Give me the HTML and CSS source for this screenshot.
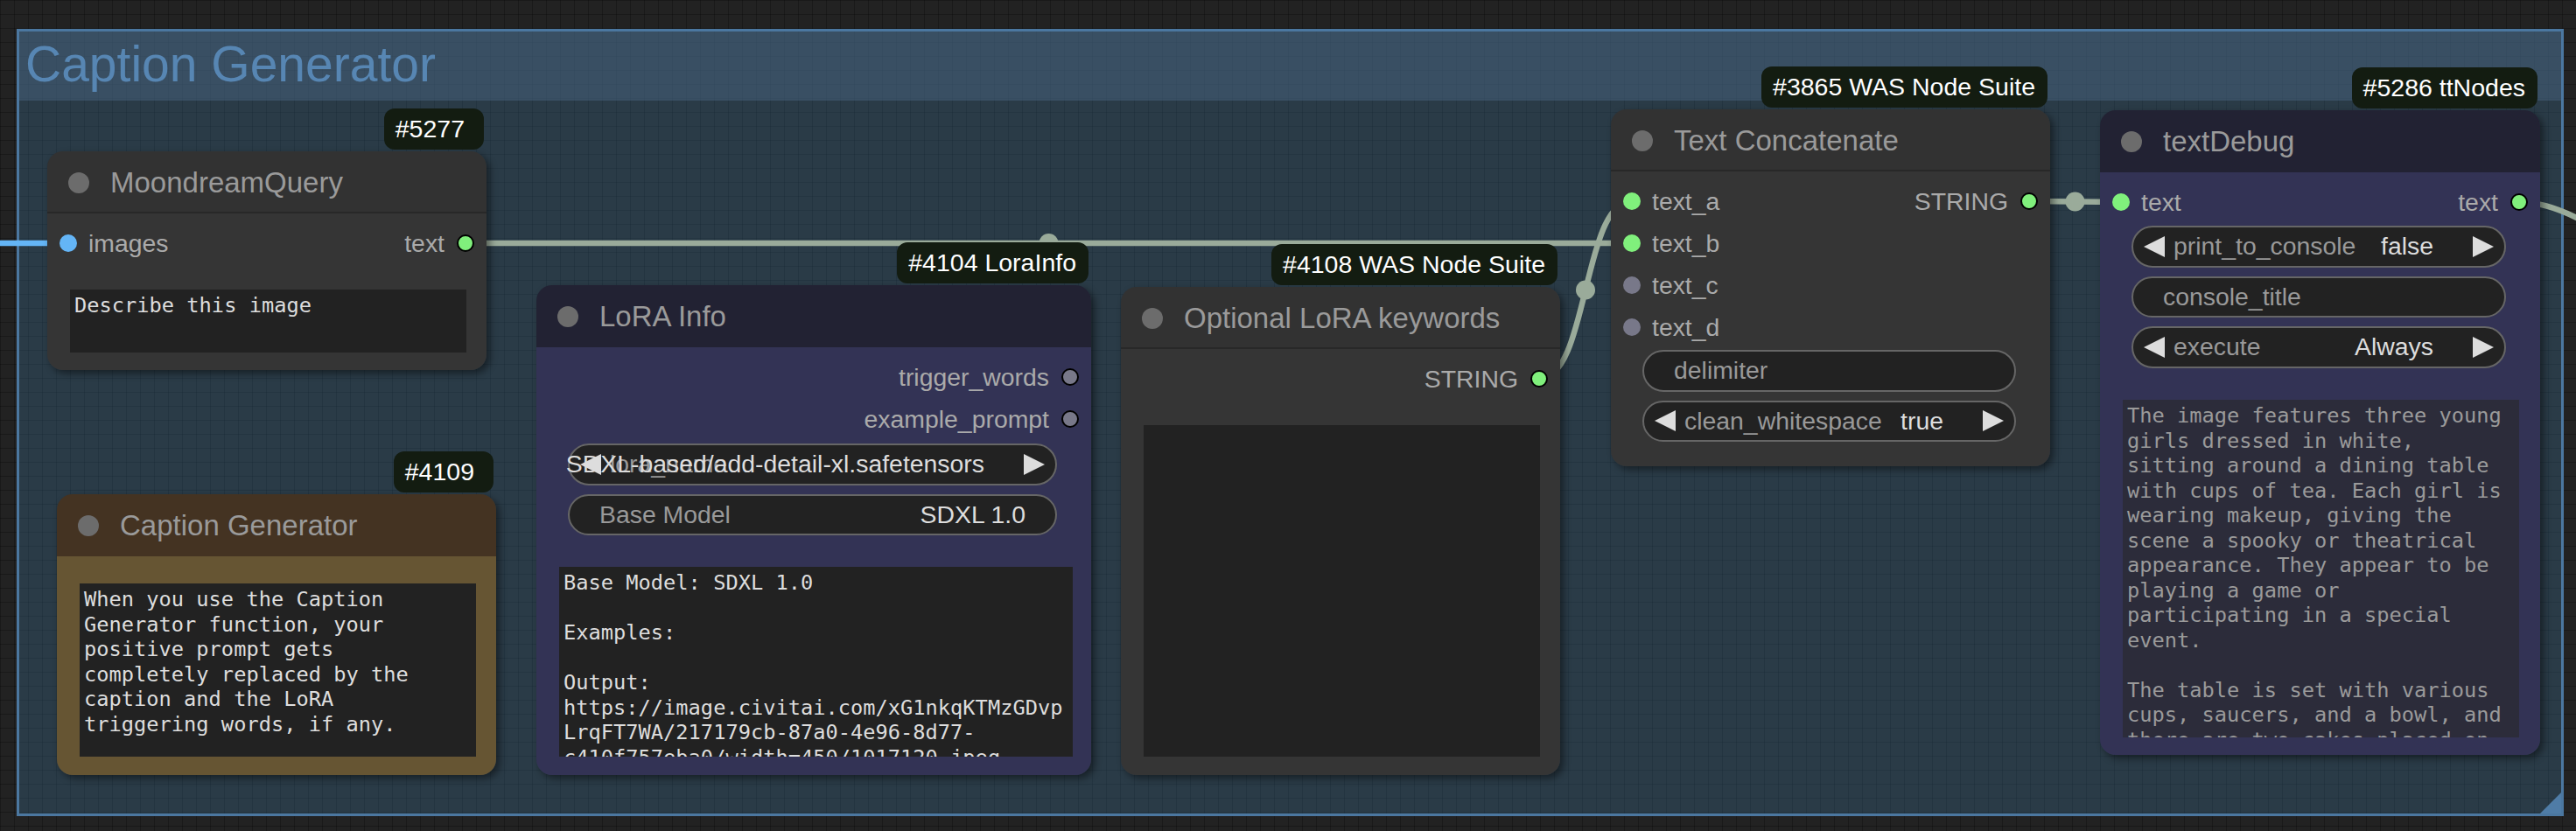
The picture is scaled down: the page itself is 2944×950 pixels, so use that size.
FILE: index.html
```html
<!DOCTYPE html>
<html lang="en">
<head>
<meta charset="utf-8">
<title>Caption Generator</title>
<link rel="stylesheet" href="styles.css">
</head>
<body>
<div class="canvas">
  <div class="group">
    <div class="group-title">Caption Generator</div>
    <div class="group-resize"></div>
  </div>

  <svg class="links" width="2944" height="950" viewBox="0 0 2944 950">
    <path class="link link-image" d="M0 278 L78 278"/>
    <path class="link" d="M532 278 C865 278 1532 278 1865 278"/>
    <circle class="link-mid" cx="1198.5" cy="278" r="11"/>
    <path class="link" d="M1759 433 C1816 433 1808 230 1865 230"/>
    <circle class="link-mid" cx="1812" cy="331.5" r="11"/>
    <path class="link" d="M2319 230 C2345 230 2398 231 2424 231"/>
    <circle class="link-mid" cx="2371.5" cy="230.5" r="11"/>
    <path class="link" d="M2879 231 C3039 231 3240 600 3400 600"/>
  </svg>

  <div class="node default n-moondream">
    <div class="badge badge-wide">#5277</div>
    <div class="title"><span class="tdot"></span><span class="tname">MoondreamQuery</span></div>
    <div class="body">
      <div class="slot-row">
        <div class="slot-in"><span class="dot dot-image"></span>images</div>
        <div class="slot-out">text<span class="dot dot-string dot-out"></span></div>
      </div>
      <textarea class="ta" readonly>Describe this image</textarea>
    </div>
  </div>

  <div class="node yellow n-note">
    <div class="badge badge-wide">#4109</div>
    <div class="title"><span class="tdot"></span><span class="tname">Caption Generator</span></div>
    <div class="body">
      <textarea class="ta" readonly>When you use the Caption Generator function, your positive prompt gets completely replaced by the caption and the LoRA triggering words, if any.</textarea>
    </div>
  </div>

  <div class="node blue n-lora">
    <div class="badge">#4104 LoraInfo</div>
    <div class="title"><span class="tdot"></span><span class="tname">LoRA Info</span></div>
    <div class="body">
      <div class="slot-row">
        <div class="slot-out">trigger_words<span class="dot dot-idle dot-out"></span></div>
      </div>
      <div class="slot-row">
        <div class="slot-out">example_prompt<span class="dot dot-idle dot-out"></span></div>
      </div>
      <div class="widgets">
        <div class="w combo"><span class="arr arr-l"></span><span class="wl">lora_name</span><span class="wv">SDXL-based/add-detail-xl.safetensors</span><span class="arr arr-r"></span></div>
        <div class="w text"><span class="wl">Base Model</span><span class="wv">SDXL 1.0</span></div>
      </div>
      <textarea class="ta" readonly>Base Model: SDXL 1.0

Examples:

Output:
https://image.civitai.com/xG1nkqKTMzGDvpLrqFT7WA/217179cb-87a0-4e96-8d77-c410f757eba0/width=450/1017120.jpeg</textarea>
    </div>
  </div>

  <div class="node default n-optional">
    <div class="badge">#4108 WAS Node Suite</div>
    <div class="title"><span class="tdot"></span><span class="tname">Optional LoRA keywords</span></div>
    <div class="body">
      <div class="slot-row">
        <div class="slot-out">STRING<span class="dot dot-string dot-out"></span></div>
      </div>
      <textarea class="ta" readonly></textarea>
    </div>
  </div>

  <div class="node default n-concat">
    <div class="badge">#3865 WAS Node Suite</div>
    <div class="title"><span class="tdot"></span><span class="tname">Text Concatenate</span></div>
    <div class="body">
      <div class="slot-row">
        <div class="slot-in"><span class="dot dot-string"></span>text_a</div>
        <div class="slot-out">STRING<span class="dot dot-string dot-out"></span></div>
      </div>
      <div class="slot-row">
        <div class="slot-in"><span class="dot dot-string"></span>text_b</div>
      </div>
      <div class="slot-row">
        <div class="slot-in"><span class="dot dot-idle"></span>text_c</div>
      </div>
      <div class="slot-row">
        <div class="slot-in"><span class="dot dot-idle"></span>text_d</div>
      </div>
      <div class="widgets">
        <div class="w text"><span class="wl">delimiter</span><span class="wv"></span></div>
        <div class="w combo"><span class="arr arr-l"></span><span class="wl">clean_whitespace</span><span class="wv">true</span><span class="arr arr-r"></span></div>
      </div>
    </div>
  </div>

  <div class="node blue n-debug">
    <div class="badge">#5286 ttNodes</div>
    <div class="title"><span class="tdot"></span><span class="tname">textDebug</span></div>
    <div class="body">
      <div class="slot-row">
        <div class="slot-in"><span class="dot dot-string"></span>text</div>
        <div class="slot-out">text<span class="dot dot-string dot-out"></span></div>
      </div>
      <div class="widgets">
        <div class="w combo"><span class="arr arr-l"></span><span class="wl">print_to_console</span><span class="wv">false</span><span class="arr arr-r"></span></div>
        <div class="w text"><span class="wl">console_title</span><span class="wv"></span></div>
        <div class="w combo"><span class="arr arr-l"></span><span class="wl">execute</span><span class="wv">Always</span><span class="arr arr-r"></span></div>
      </div>
      <textarea class="ta ta-disabled" readonly>The image features three young girls dressed in white, sitting around a dining table with cups of tea. Each girl is wearing makeup, giving the scene a spooky or theatrical appearance. They appear to be playing a game or participating in a special event.

The table is set with various cups, saucers, and a bowl, and there are two cakes placed on the table as well.</textarea>
    </div>
  </div>
</div>
</body>
</html>
```

FILE: styles.css
```css
* { box-sizing: border-box; }

html, body {
  margin: 0;
  padding: 0;
}

body {
  width: 2944px;
  height: 950px;
  overflow: hidden;
  background-color: #222222;
  background-image:
    linear-gradient(to right, rgba(0, 0, 0, 0.28) 1px, transparent 1px),
    linear-gradient(to bottom, rgba(0, 0, 0, 0.28) 1px, transparent 1px);
  background-size: 16px 16px;
  font-family: "Liberation Sans", Arial, sans-serif;
}

.canvas {
  position: relative;
  width: 2944px;
  height: 950px;
}

/* ---------- group ---------- */
.group {
  position: absolute;
  left: 19px;
  top: 33px;
  width: 2911px;
  height: 900px;
  border: 3px solid #4b77a0;
  background: rgba(63, 120, 158, 0.3);
}

.group-title {
  height: 79px;
  background: rgba(72, 100, 128, 0.5);
  color: #5786b3;
  font-size: 57px;
  padding: 0 0 6px 7px;
  display: flex;
  align-items: center;
  white-space: nowrap;
}

.group-resize {
  position: absolute;
  right: 0;
  bottom: 0;
  width: 0;
  height: 0;
  border-left: 24px solid transparent;
  border-bottom: 24px solid #4f7ca6;
}

/* ---------- links ---------- */
.links {
  position: absolute;
  left: 0;
  top: 0;
  overflow: visible;
}

.link {
  fill: none;
  stroke: #9aab9a;
  stroke-width: 6.5;
}

.link-image {
  stroke: #64b5f6;
}

.link-mid {
  fill: #9aab9a;
}

/* ---------- nodes ---------- */
.node {
  position: absolute;
  border-radius: 18px;
  box-shadow: 4px 4px 8px rgba(0, 0, 0, 0.45);
  display: flex;
  flex-direction: column;
}

.n-moondream { left: 54px;   top: 173px; width: 502px; height: 250px; }
.n-note      { left: 65px;   top: 565px; width: 502px; height: 321px; }
.n-lora      { left: 613px;  top: 326px; width: 634px; height: 560px; }
.n-optional  { left: 1281px; top: 328px; width: 502px; height: 558px; }
.n-concat    { left: 1841px; top: 125px; width: 502px; height: 408px; }
.n-debug     { left: 2400px; top: 126px; width: 503px; height: 737px; }

.title {
  height: 71px;
  flex: none;
  display: flex;
  align-items: center;
  border-radius: 18px 18px 0 0;
  font-size: 33px;
  color: #9a9a9a;
  white-space: nowrap;
}

.tdot {
  width: 24px;
  height: 24px;
  border-radius: 50%;
  background: #6c6c6c;
  margin-left: 24px;
  margin-right: 24px;
  flex: none;
}

.body {
  flex: 1;
  display: flex;
  flex-direction: column;
  padding-top: 10px;
  border-radius: 0 0 18px 18px;
  min-height: 0;
}

.default .title { background: #323232; box-shadow: inset 0 -2px 0 rgba(0, 0, 0, 0.2); }
.default .body  { background: #353535; }
.blue .title    { background: #222233; }
.blue .body     { background: #333355; }
.yellow .title  { background: #443322; }
.yellow .body   { background: #665533; }

/* ---------- badges ---------- */
.badge {
  position: absolute;
  right: 3px;
  bottom: calc(100% + 2px);
  height: 47px;
  padding: 0 14px 0 13px;
  background: #131c11;
  color: #ffffff;
  border-radius: 12px;
  font-size: 28.5px;
  display: flex;
  align-items: center;
  white-space: nowrap;
}

.badge-wide {
  padding-right: 22px;
}

/* ---------- slots ---------- */
.slot-row {
  height: 48px;
  flex: none;
  display: flex;
  align-items: center;
  font-size: 28.4px;
  color: #aaaaaa;
  white-space: nowrap;
}

.slot-in {
  display: flex;
  align-items: center;
  gap: 13px;
  padding-left: 14px;
}

.slot-out {
  display: flex;
  align-items: center;
  gap: 14px;
  padding-right: 14px;
  margin-left: auto;
}

.dot {
  width: 20px;
  height: 20px;
  border-radius: 50%;
  flex: none;
}

.dot-image  { background: #64b5f6; }
.dot-string { background: #80f07c; }
.dot-idle   { background: #787889; }
.dot-out    { border: 2px solid #000000; }

/* ---------- widgets ---------- */
.widgets {
  display: flex;
  flex-direction: column;
  gap: 10px;
  margin: 2px 39px 0 36px;
  flex: none;
}

.n-lora .widgets  { margin-top: 4px; }
.n-debug .widgets { margin-top: 3px; }
.n-concat .body   { padding-bottom: 28px; }

.w {
  height: 47.5px;
  border: 2px solid #666666;
  border-radius: 24px;
  background: #222222;
  font-size: 28.4px;
  display: flex;
  align-items: center;
  white-space: nowrap;
}

.wl {
  color: #999999;
  flex: none;
}

.wv {
  color: #dddddd;
  flex: 1 1 0;
  min-width: 0;
  display: flex;
  justify-content: flex-end;
}

.combo {
  padding: 0 12px;
}

.combo .wl {
  margin-left: 10px;
}

.combo .wv {
  margin-right: 45px;
}

.text {
  padding: 0 34px;
}

.arr {
  width: 0;
  height: 0;
  flex: none;
  border-top: 12px solid transparent;
  border-bottom: 12px solid transparent;
}

.arr-l { border-right: 24px solid #dddddd; }
.arr-r { border-left: 24px solid #dddddd; }

/* ---------- text areas ---------- */
.ta {
  display: block;
  flex: 1 1 0;
  min-height: 0;
  margin: 0 23px 20px 26px;
  padding: 4px 9px 4px 5px;
  border: none;
  outline: none;
  resize: none;
  overflow: hidden;
  background: #222222;
  color: #dddddd;
  font-family: "DejaVu Sans Mono", monospace;
  font-size: 23.7px;
  line-height: 28.5px;
}

.n-moondream .ta { margin-top: 29px; }
.n-note .body    { padding-top: 0; }
.n-note .ta      { margin-top: 31px; margin-bottom: 21px; }
.n-lora .ta      { margin-top: 36px; margin-bottom: 21px; margin-right: 21px; }
.n-optional .ta  { margin-top: 29px; margin-bottom: 21px; }
.n-debug .ta     { margin-top: 36.5px; margin-right: 24px; }

.ta-disabled {
  background: #2c2c3a;
  color: #9a9a9a;
}
```
